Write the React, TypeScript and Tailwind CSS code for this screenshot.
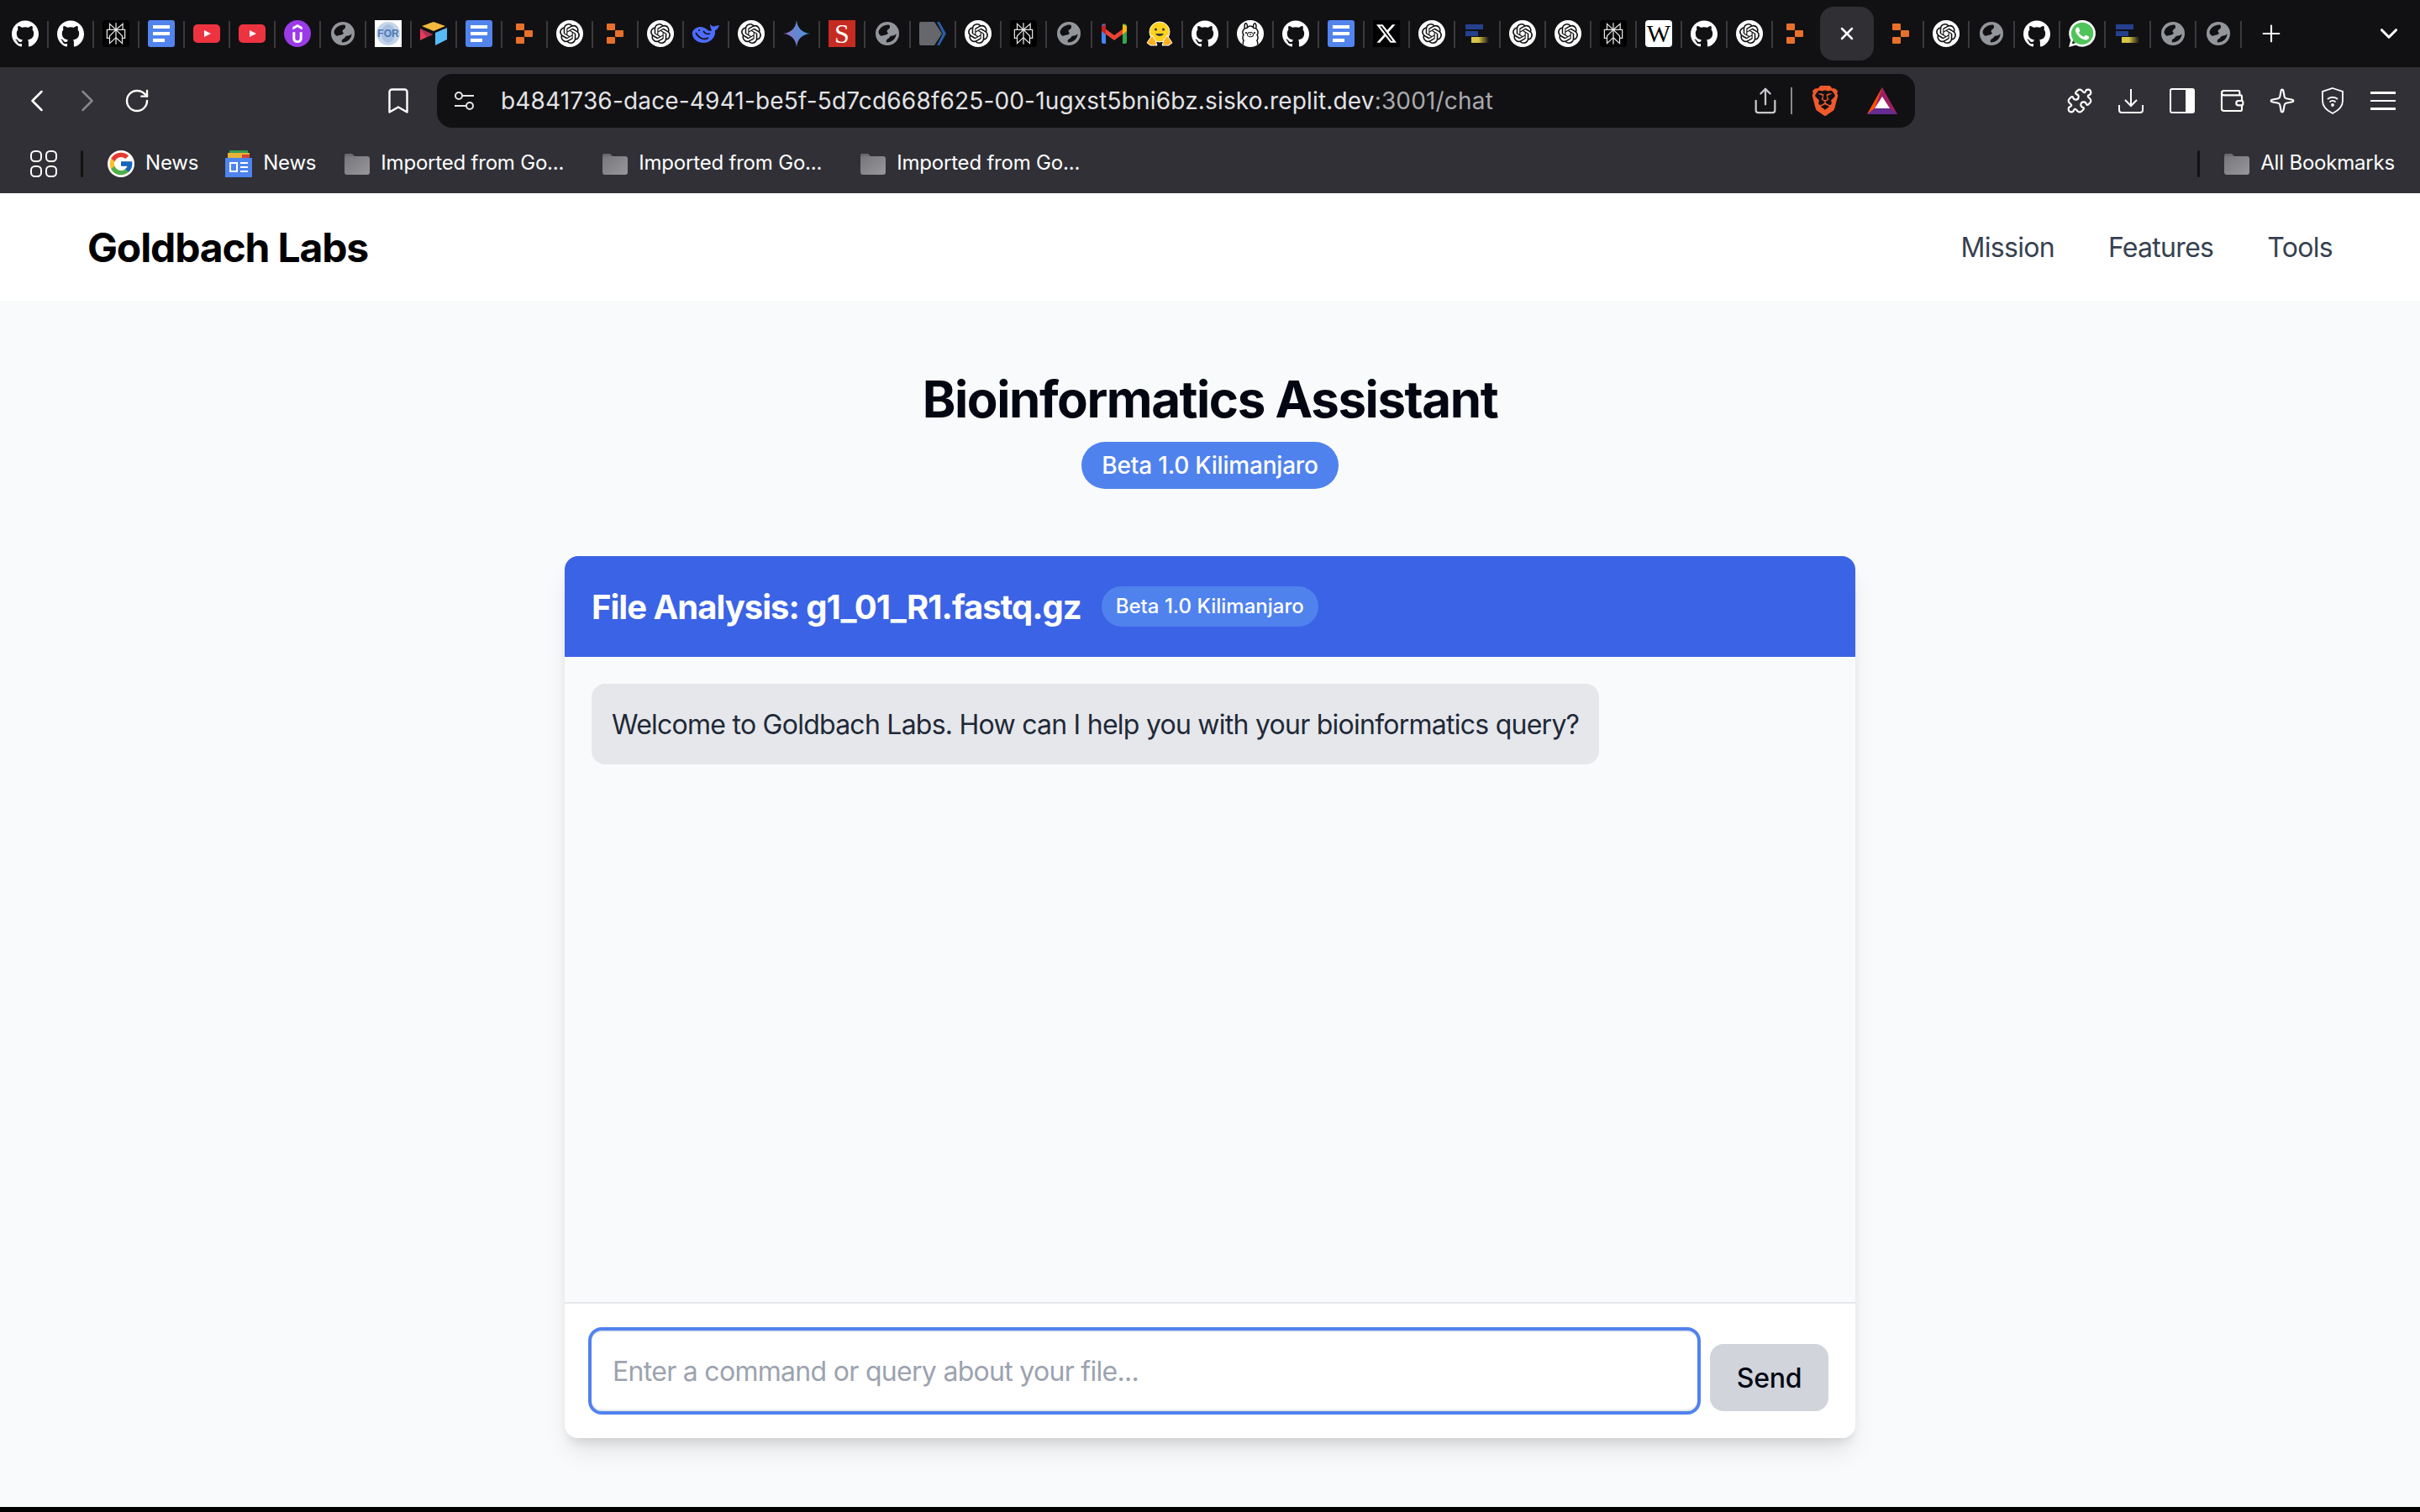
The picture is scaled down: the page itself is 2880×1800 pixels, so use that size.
import {
  SiGithub,
  SiOpenai,
  SiPerplexity,
  SiUdemy,
  SiOllama,
  SiX,
  SiWhatsapp,
  SiBrave,
} from 'react-icons/si'
import { ChevronLeft, ChevronRight, RotateCw, Bookmark, Share, Puzzle, Wallet, Sparkle, Plus, X, ChevronDown } from 'lucide-react'

type TabKind =
  | 'github' | 'perplexity' | 'docs' | 'youtube' | 'udemy' | 'globe' | 'for' | 'airtable'
  | 'replit' | 'openai' | 'deepseek' | 'gemini' | 'scribd' | 'arrow' | 'gmail' | 'hugging'
  | 'ollama' | 'x' | 'bars' | 'wiki' | 'whatsapp'

const tabsBefore: TabKind[] = [
  'github', 'github', 'perplexity', 'docs', 'youtube', 'youtube', 'udemy', 'globe', 'for', 'airtable',
  'docs', 'replit', 'openai', 'replit', 'openai', 'deepseek', 'openai', 'gemini', 'scribd', 'globe',
  'arrow', 'openai', 'perplexity', 'globe', 'gmail', 'hugging', 'github', 'ollama', 'github', 'docs',
  'x', 'openai', 'bars', 'openai', 'openai', 'perplexity', 'wiki', 'github', 'openai', 'replit',
]

const tabsAfter: TabKind[] = ['replit', 'openai', 'globe', 'github', 'whatsapp', 'bars', 'globe', 'globe']

function Replit() {
  return (
    <svg width="20" height="24" viewBox="0 0 20 24">
      <rect x="0" y="0" width="10" height="8" rx="1" fill="#e8702a" />
      <rect x="10" y="8" width="10" height="8" rx="1" fill="#e8702a" />
      <rect x="0" y="16" width="10" height="8" rx="1" fill="#e8702a" />
    </svg>
  )
}

function Globe() {
  return (
    <svg width="28" height="28" viewBox="0 0 28 28">
      <circle cx="14" cy="14" r="14" fill="#92969a" />
      <path d="M3.500 12C4.500 7 10 3 16 3.500c2 2 1 4.500-1 5.500-2 1-2 3 0 4.500-2 3-6 2-8 3.500-2-1-3.500-3-3.500-5z" fill="#111114" />
      <path d="M24.500 14c0 6-5 10.500-11.500 10.500-1-2 0-3.500 2-4.500 2-1 1-2 3-3 2.500-1 4.500 0 6.500-3z" fill="#111114" />
    </svg>
  )
}

function TabIcon({ kind }: { kind: TabKind }) {
  switch (kind) {
    case 'github':
      return <SiGithub size={32} color="#ffffff" />
    case 'perplexity':
      return (
        <div className="w-8 h-8 rounded bg-black flex items-center justify-center">
          <SiPerplexity size={26} color="#e4e4e4" />
        </div>
      )
    case 'docs':
      return (
        <div className="w-8 h-8 rounded-[3px] bg-[#5284ee] flex flex-col gap-1 px-1.5 justify-center">
          <div className="h-1 w-5 bg-white" />
          <div className="h-1 w-5 bg-white" />
          <div className="h-1 w-3.5 bg-white" />
        </div>
      )
    case 'youtube':
      return (
        <svg width="32" height="22" viewBox="0 0 32 22">
          <rect width="32" height="22" rx="5" fill="#ee3340" />
          <path d="M13 7l8 4-8 4z" fill="#ffffff" />
        </svg>
      )
    case 'udemy':
      return (
        <div className="w-8 h-8 rounded-full bg-[#9b3be8] flex items-center justify-center">
          <SiUdemy size={22} color="#ffffff" />
        </div>
      )
    case 'globe':
      return <Globe />
    case 'for':
      return (
        <svg width="32" height="32" viewBox="0 0 32 32">
          <rect width="32" height="32" fill="#ffffff" />
          <ellipse cx="16" cy="16" rx="14" ry="14" fill="#c4d4ea" />
          <ellipse cx="16" cy="16" rx="8" ry="11" fill="#a9c1e0" />
          <text x="16" y="20" textAnchor="middle" fontSize="12" fontWeight="700" fontFamily="Liberation Sans, sans-serif" fill="#4d78b5">FOR</text>
        </svg>
      )
    case 'airtable':
      return (
        <svg width="32" height="28" viewBox="0 0 32 28">
          <path d="M16 0l14 5-14 6L2 5z" fill="#f3b93c" />
          <path d="M18 13l14-6v14l-14 7z" fill="#56bcf7" />
          <path d="M0 8l15 7-15 7z" fill="#e8395e" />
          <path d="M0 8l15 7-7 3z" fill="#a5324e" />
        </svg>
      )
    case 'replit':
      return <Replit />
    case 'openai':
      return (
        <div className="w-8 h-8 rounded-full bg-white flex items-center justify-center">
          <SiOpenai size={24} color="#111111" />
        </div>
      )
    case 'deepseek':
      return (
        <svg width="32" height="24" viewBox="0 0 32 24">
          <path d="M0 10C3 4 10 2 16 6c2 2 5 4 7 2-1-2-2-4-2-7 2 2 4 3 6 2l5-1c-1 3-3 6-5 6 1 8-5 15-14 15C6 23-1 18 0 10z" fill="#4d6bfe" />
          <path d="M4 11c4 7 10 9 15 6" fill="none" stroke="#111114" strokeWidth="1.800" />
          <path d="M13 9c2 3 5 4 8 3" fill="none" stroke="#111114" strokeWidth="1.400" />
          <circle cx="8" cy="8" r="1" fill="#111114" />
        </svg>
      )
    case 'gemini':
      return (
        <svg width="32" height="32" viewBox="0 0 32 32">
          <defs>
            <linearGradient id="gem" x1="0" y1="0.6" x2="1" y2="0.4">
              <stop offset="0" stopColor="#9170c4" />
              <stop offset="1" stopColor="#3f9bdc" />
            </linearGradient>
          </defs>
          <path d="M16 0c1 9 6 15 16 16-10 1-15 7-16 16-1-9-6-15-16-16 10-1 15-7 16-16z" fill="url(#gem)" />
        </svg>
      )
    case 'scribd':
      return (
        <div className="w-8 h-8 bg-[#c62b22] flex items-center justify-center text-white text-[32px] leading-none font-['Liberation_Serif',serif]">
          S
        </div>
      )
    case 'arrow':
      return (
        <svg width="32" height="28" viewBox="0 0 32 28">
          <path d="M2 0h16l9 14-9 14H2a2 2 0 0 1-2-2V2a2 2 0 0 1 2-2z" fill="#66676c" />
          <path d="M21 0h3l8 14-8 14h-3l7-14z" fill="#2a5ea8" />
        </svg>
      )
    case 'gmail':
      return (
        <svg width="30" height="24" viewBox="0 0 30 24">
          <path d="M0 3a3 3 0 0 1 5-2l0 23H2a2 2 0 0 1-2-2z" fill="#4285f4" />
          <path d="M30 3a3 3 0 0 0-5-2l0 23h3a2 2 0 0 0 2-2z" fill="#34a853" />
          <path d="M0 3l15 11L30 3v6L15 20 0 9z" fill="#ea4335" />
          <path d="M25 1l5 2v6l-5 4z" fill="#fbbc04" />
          <path d="M0 3l5-2v12L0 9z" fill="#c5221f" />
        </svg>
      )
    case 'hugging':
      return (
        <svg width="32" height="32" viewBox="0 0 32 32">
          <circle cx="16" cy="14" r="12" fill="#ffd21e" stroke="#ffffff" strokeWidth="1" />
          <path d="M1 27l6-9 4 6 2 6H5z" fill="#ffb020" stroke="#ffffff" strokeWidth="1" />
          <path d="M31 27l-6-9-4 6-2 6h8z" fill="#ffb020" stroke="#ffffff" strokeWidth="1" />
          <circle cx="11.500" cy="11" r="1.600" fill="#3a3b45" />
          <circle cx="20.500" cy="11" r="1.600" fill="#3a3b45" />
          <path d="M11 16c2 4 8 4 10 0z" fill="#3a3b45" />
        </svg>
      )
    case 'ollama':
      return (
        <div className="w-8 h-8 rounded-full bg-white flex items-center justify-center overflow-hidden">
          <SiOllama size={26} color="#111111" />
        </div>
      )
    case 'x':
      return (
        <div className="w-8 h-8 bg-black flex items-center justify-center">
          <SiX size={24} color="#ffffff" />
        </div>
      )
    case 'bars':
      return (
        <svg width="28" height="22" viewBox="0 0 28 22">
          <defs>
            <linearGradient id="barfade" x1="0" y1="0" x2="1" y2="0">
              <stop offset="0.4" stopColor="#d8c54a" />
              <stop offset="1" stopColor="#d8c54a" stopOpacity="0" />
            </linearGradient>
          </defs>
          <rect x="0" y="0" width="21" height="6" fill="#24408f" />
          <rect x="0" y="8" width="15" height="6" fill="#24408f" />
          <rect x="7" y="15" width="21" height="7" fill="url(#barfade)" />
        </svg>
      )
    case 'wiki':
      return (
        <div className="w-8 h-8 rounded bg-white flex items-center justify-center text-black text-[30px] leading-none font-['Liberation_Serif',serif]">
          W
        </div>
      )
    case 'whatsapp':
      return (
        <div className="relative w-8 h-8">
          <div className="absolute inset-[2px] rounded-full bg-[#4fc45a]" />
          <SiWhatsapp size={32} color="#ffffff" className="relative" />
        </div>
      )
  }
}

function Tab({ kind, divider = true }: { kind: TabKind; divider?: boolean }) {
  return (
    <div className="relative w-[54px] h-20 shrink-0 flex items-center justify-center">
      <TabIcon kind={kind} />
      {divider && <div className="absolute right-[-1px] top-[25px] w-0.5 h-8 bg-[#3a3a3e]" />}
    </div>
  )
}

function Folder() {
  return (
    <svg width="30" height="25" viewBox="0 0 30 25" className="shrink-0">
      <defs>
        <linearGradient id="fold" x1="0" y1="0" x2="1" y2="1">
          <stop offset="0" stopColor="#77777b" />
          <stop offset="1" stopColor="#98989c" />
        </linearGradient>
      </defs>
      <path d="M0 2a2 2 0 0 1 2-2h7l3 3h0v2H0z" fill="#6b6b6f" />
      <rect x="0" y="3" width="30" height="22" rx="3" fill="url(#fold)" />
    </svg>
  )
}

function BookmarkItem({ icon, label, className }: { icon: React.ReactNode; label: string; className?: string }) {
  return (
    <div className={`flex items-center gap-[13px] text-[24px] leading-8 tracking-[-0.2px] text-white ${className ?? ''}`}>
      {icon}
      <span className="mb-[2px]">{label}</span>
    </div>
  )
}

function BrowserChrome() {
  return (
    <div className="font-['Inter',sans-serif]">
      <div className="h-20 bg-[#111114] flex items-center pl-[3px]">
        {tabsBefore.map((kind, i) => (
          <Tab key={i} kind={kind} divider={i !== tabsBefore.length - 1} />
        ))}
        <div className="ml-[3px] mr-[5px] w-16 h-16 shrink-0 rounded-2xl bg-[#2f2f34] flex items-center justify-center">
          <X size={24} color="#ffffff" strokeWidth={2.5} />
        </div>
        {tabsAfter.map((kind, i) => (
          <Tab key={i} kind={kind} />
        ))}
        <Plus size={32} color="#ffffff" strokeWidth={1.6} className="ml-5 shrink-0" />
        <ChevronDown size={34} color="#ffffff" strokeWidth={2.2} className="ml-[107px] shrink-0" />
      </div>

      <div className="h-20 bg-[#303036] flex items-center">
        <ChevronLeft size={44} color="#ffffff" strokeWidth={1.4} className="ml-[22px] shrink-0" />
        <ChevronRight size={44} color="#85858a" strokeWidth={1.4} className="ml-[16px] shrink-0" />
        <RotateCw size={32} color="#ffffff" strokeWidth={1.8} className="ml-[21px] shrink-0" />
        <Bookmark size={36} color="#ffffff" strokeWidth={1.6} className="ml-[277px] shrink-0" />
        <div className="ml-[28px] w-[1759px] h-16 bg-[#111114] rounded-[18px] flex items-center shrink-0">
          <svg width="26" height="24" viewBox="0 0 26 24" className="ml-5 shrink-0" fill="none" stroke="#e5e5e7" strokeWidth="2">
            <circle cx="6" cy="6" r="4" />
            <path d="M10 6h14" />
            <circle cx="19" cy="18" r="4" />
            <path d="M1 18h14" />
          </svg>
          <div className="ml-[30px] text-[28px] leading-9 text-[#e3e3e6] tracking-[0.17px] whitespace-nowrap">
            b4841736-dace-4941-be5f-5d7cd668f625-00-1ugxst5bni6bz.sisko.replit.dev<span className="text-[#a9a9ae]">:3001/chat</span>
          </div>
          <Share size={34} color="#c8c8cc" strokeWidth={1.6} className="ml-auto shrink-0" />
          <div className="ml-[13px] w-0.5 h-8 bg-[#8a8a8e]" />
          <SiBrave size={36} color="#f0592b" className="ml-[21px] shrink-0" />
          <svg width="36" height="32" viewBox="0 0 36 32" className="ml-8 mr-[21px] shrink-0">
            <path d="M18 0L0 32h36z" fill="#9e1f63" />
            <path d="M18 0L0 32l9-7z" fill="#ff5000" />
            <path d="M0 32h36l-9-7H9z" fill="#662d91" />
            <path d="M18 11l-9 14h18z" fill="#ffffff" />
          </svg>
        </div>
        <Puzzle size={32} color="#ffffff" strokeWidth={1.6} className="ml-[180px] shrink-0" />
        <svg width="30" height="30" viewBox="0 0 30 30" className="ml-[30px] shrink-0" fill="none" stroke="#ffffff" strokeWidth="2">
          <path d="M15 1v20M8 14l7 7 7-7" />
          <path d="M1 20v6a3 3 0 0 0 3 3h22a3 3 0 0 0 3-3v-6" />
        </svg>
        <svg width="30" height="30" viewBox="0 0 30 30" className="ml-[31px] shrink-0">
          <rect x="1" y="1" width="28" height="28" rx="2" fill="none" stroke="#ffffff" strokeWidth="2" />
          <rect x="19" y="1" width="10" height="28" fill="#ffffff" />
        </svg>
        <Wallet size={32} color="#ffffff" strokeWidth={1.6} className="ml-7 shrink-0" />
        <Sparkle size={32} color="#ffffff" strokeWidth={1.6} className="ml-7 shrink-0" />
        <svg width="28" height="32" viewBox="0 0 28 32" className="ml-[30px] shrink-0" fill="none" stroke="#ffffff" strokeWidth="1.8">
          <path d="M14 1l12 4v11c0 7-6 12-12 15C8 28 2 23 2 16V5z" />
          <path d="M8 14c3-3 9-3 12 0M10.500 17.500c2-2 5-2 7 0" />
          <circle cx="14" cy="21" r="1" fill="#ffffff" />
        </svg>
        <div className="ml-[31px] w-[30px] flex flex-col gap-[7px] shrink-0">
          <div className="h-[2.5px] bg-white" />
          <div className="h-[2.5px] bg-white" />
          <div className="h-[2.5px] bg-white" />
        </div>
      </div>

      <div className="h-[70px] bg-[#303036] flex items-center">
        <svg width="32" height="32" viewBox="0 0 32 32" className="ml-9 shrink-0" fill="none" stroke="#ffffff" strokeWidth="2">
          <rect x="1" y="1" width="12" height="12" rx="4.500" />
          <rect x="19" y="1" width="12" height="12" rx="4.500" />
          <rect x="1" y="19" width="12" height="12" rx="4.500" />
          <rect x="19" y="19" width="12" height="12" rx="4.500" />
        </svg>
        <div className="ml-7 w-[3px] h-8 bg-[#111114] rounded-sm" />
        <BookmarkItem
          className="ml-[29px]"
          label="News"
          icon={
            <svg width="32" height="32" viewBox="0 0 48 48" className="shrink-0 rounded-full bg-white">
              <path d="M43.600 20.100H42V20H24v8h11.300C33.700 32.700 29.200 36 24 36c-6.600 0-12-5.400-12-12s5.400-12 12-12c3.100 0 5.800 1.200 8 3l5.700-5.700C34 6.100 29.300 4 24 4 13 4 4 13 4 24s9 20 20 20 20-9 20-20c0-1.300-.1-2.700-.4-3.900z" fill="#fbc02d" />
              <path d="M6.300 14.700l6.600 4.800C14.700 15.100 19 12 24 12c3.100 0 5.800 1.200 8 3l5.700-5.700C34 6.100 29.300 4 24 4 16.300 4 9.700 8.300 6.300 14.700z" fill="#e53935" />
              <path d="M24 44c5.200 0 9.900-2 13.400-5.200l-6.200-5.200C29.200 35.100 26.700 36 24 36c-5.200 0-9.600-3.300-11.300-8l-6.500 5C9.500 39.600 16.200 44 24 44z" fill="#4caf50" />
              <path d="M43.600 20.100L43.600 20H24v8h11.300c-.8 2.200-2.200 4.200-4.100 5.600l6.200 5.200C37 39.200 44 34 44 24c0-1.300-.1-2.700-.4-3.900z" fill="#1565c0" />
            </svg>
          }
        />
        <BookmarkItem
          className="ml-8"
          label="News"
          icon={
            <svg width="32" height="32" viewBox="0 0 32 32" className="shrink-0">
              <rect x="5" y="0" width="22" height="8" fill="#3a9a4e" />
              <rect x="3" y="3" width="26" height="8" fill="#e8b23a" />
              <rect x="20" y="5" width="9" height="6" fill="#d2453a" />
              <rect x="0" y="9" width="32" height="23" fill="#4d84ee" />
              <rect x="6" y="15" width="8" height="10" fill="none" stroke="#ffffff" strokeWidth="2" />
              <path d="M18 15h9M18 20h9M18 25h9" stroke="#ffffff" strokeWidth="2" />
            </svg>
          }
        />
        <BookmarkItem className="ml-[34px]" label="Imported from Go..." icon={<Folder />} />
        <BookmarkItem className="ml-[46px]" label="Imported from Go..." icon={<Folder />} />
        <BookmarkItem className="ml-[46px]" label="Imported from Go..." icon={<Folder />} />
        <div className="ml-auto w-[3px] h-8 bg-[#111114] rounded-sm" />
        <BookmarkItem className="ml-[29px] mr-[30px]" label="All Bookmarks" icon={<Folder />} />
      </div>
    </div>
  )
}

export default function App() {
  return (
    <div className="w-[2880px] h-[1800px] flex flex-col bg-black overflow-hidden">
      <BrowserChrome />

      <header className="h-32 shrink-0 bg-white flex items-center justify-between px-[104px] pt-0.5 font-['Inter',sans-serif]">
        <div className="text-[48px] leading-[64px] font-bold tracking-[-1.15px] text-black">Goldbach Labs</div>
        <nav className="flex gap-16 text-[32px] leading-[48px] tracking-[-0.7px] text-[#374151]">
          <span>Mission</span>
          <span>Features</span>
          <span>Tools</span>
        </nav>
      </header>

      <main className="h-[1436px] shrink-0 bg-[#f9fafb] flex flex-col items-center pt-[81px] font-['Inter',sans-serif]">
        <h1 className="text-[60px] leading-[72px] font-bold tracking-[-1.45px] text-[#030712]">Bioinformatics Assistant</h1>
        <div className="mt-[15px] h-14 px-6 rounded-full bg-[#5082ee] text-white text-[28px] leading-[56px] font-medium tracking-[-0.2px]">
          Beta 1.0 Kilimanjaro
        </div>

        <section className="mt-20 w-[1536px] h-[1050px] rounded-2xl bg-white shadow-[0_20px_30px_-6px_rgba(0,0,0,0.1),0_8px_12px_-4px_rgba(0,0,0,0.1)] flex flex-col overflow-hidden">
          <div className="h-[120px] shrink-0 bg-[#3b63e5] flex items-center px-8 gap-6">
            <div className="text-[40px] leading-[56px] font-bold tracking-[-1px] text-white pt-0.5">File Analysis: g1_01_R1.fastq.gz</div>
            <div className="h-12 px-[17px] rounded-full bg-[#5082ee] text-white text-[24px] leading-[48px] font-medium">
              Beta 1.0 Kilimanjaro
            </div>
          </div>

          <div className="flex-1 bg-[#f9fafb] p-8">
            <div className="inline-block rounded-2xl bg-[#e5e7eb] px-6 pt-[25px] pb-[23px] text-[32px] leading-[48px] tracking-[-0.75px] text-[#1f2937]">
              Welcome to Goldbach Labs. How can I help you with your bioinformatics query?
            </div>
          </div>

          <div className="h-[162px] shrink-0 bg-white border-t-2 border-[#e5e7eb] flex items-start pl-7 pt-7 pr-8">
            <div className="w-[1324px] h-[104px] rounded-2xl border-4 border-[#5082ee] bg-white shadow-[inset_0_2px_0_#e5e7eb,inset_0_-2px_0_#e5e7eb] flex items-center px-[25px] text-[32px] tracking-[-0.7px] text-[#9ca3af] pt-0.5">
              Enter a command or query about your file...
            </div>
            <button className="ml-[11px] mt-5 w-[141px] h-20 rounded-2xl bg-[#d1d5db] pt-0.5 text-[32px] font-medium tracking-[-0.3px] text-[#030712]">
              Send
            </button>
          </div>
        </section>
      </main>
    </div>
  )
}
